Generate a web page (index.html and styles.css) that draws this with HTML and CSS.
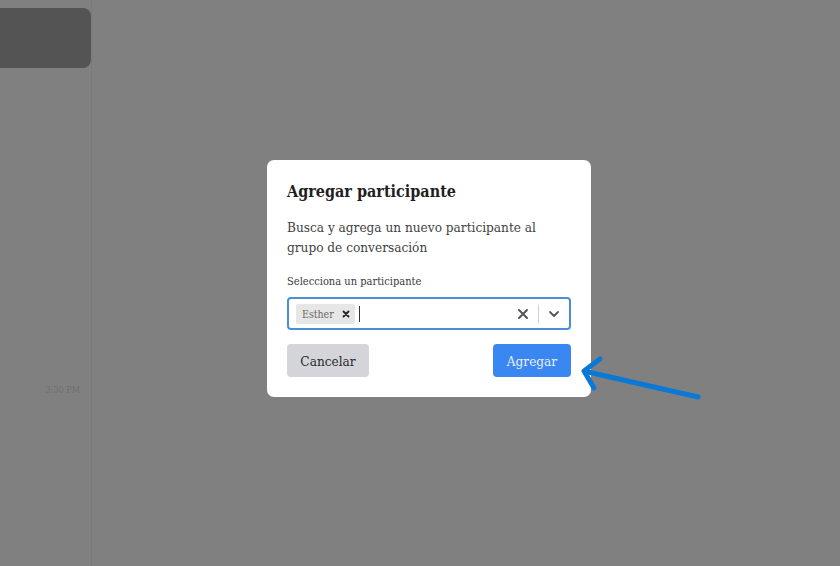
FILE: index.html
```html
<!DOCTYPE html>
<html lang="es">
<head>
<meta charset="utf-8">
<link rel="stylesheet" href="styles.css">
</head>
<body>
<div class="app">
  <aside class="sidebar">
    <div class="side-card"></div>
    <div class="side-time">3:30 PM</div>
  </aside>
  <main class="main"></main>
</div>
<div class="overlay">
  <div class="modal">
    <h2 class="title">Agregar participante</h2>
    <p class="desc">Busca y agrega un nuevo participante al grupo de conversación</p>
    <label class="label">Selecciona un participante</label>
    <div class="select">
      <div class="values">
        <span class="tag"><span class="tag-text">Esther</span><svg class="tag-x" width="8" height="8" viewBox="0 0 8 8"><path d="M1.5 1.5L6.5 6.5M6.5 1.5L1.5 6.5" stroke="#222" stroke-width="1.8" stroke-linecap="round"/></svg></span>
        <span class="caret"></span>
      </div>
      <div class="indicators">
        <svg class="clear" width="12" height="12" viewBox="0 0 12 12"><path d="M2 2L10 10M10 2L2 10" stroke="#555" stroke-width="2" stroke-linecap="round"/></svg>
        <span class="sep"></span>
        <svg class="chev" width="12" height="12" viewBox="0 0 12 12"><path d="M2 4L6 8L10 4" stroke="#555" stroke-width="1.8" fill="none" stroke-linecap="round" stroke-linejoin="round"/></svg>
      </div>
    </div>
    <div class="actions">
      <button class="btn btn-cancel">Cancelar</button>
      <button class="btn btn-add">Agregar</button>
    </div>
  </div>
  <svg class="arrow" width="140" height="60" viewBox="0 0 140 60">
    <path d="M130 41L20 16" stroke="#0a78d6" stroke-width="5" stroke-linecap="round" fill="none"/>
    <path d="M32 3L16 15L26 32" stroke="#0a78d6" stroke-width="5" stroke-linecap="round" stroke-linejoin="round" fill="none"/>
  </svg>
</div>
</body>
</html>
```
FILE: styles.css
```css
* { box-sizing: border-box; }
html, body { margin: 0; padding: 0; width: 840px; height: 566px; overflow: hidden; }
body { font-family: "DejaVu Serif Condensed", "DejaVu Serif", "Liberation Serif", serif; font-stretch: condensed; background: #808080; position: relative; }
.app { display: flex; height: 566px; }
.sidebar { width: 92px; border-right: 1px solid #7a7a7a; padding-top: 8px; display: flex; flex-direction: column; }
.side-card { height: 60px; background: #545454; border-radius: 0 8px 8px 0; }
.side-time { margin-top: 317px; text-align: right; padding-right: 11px; font-size: 9px; color: #6e6e6e; font-family: "DejaVu Serif", serif; }
.main { flex: 1; }
.overlay { position: absolute; inset: 0; display: flex; justify-content: center; padding-top: 160px; padding-left: 18px; }
.modal { width: 324px; height: 237px; background: #fff; border-radius: 7px; padding: 20px; }
.title { margin: 2px 0 0; font-size: 16px; font-weight: bold; color: #1f1f1f; line-height: 20px; }
.desc { margin: 15px 0 0; max-width: 262px; font-size: 13.5px; color: #3f3f3f; line-height: 20px; }
.label { display: block; margin-top: 18px; font-size: 11px; color: #3a3a3a; line-height: 14px; }
.select { margin-top: 8px; height: 33px; border: 2px solid #4a8fd6; border-radius: 4px; display: flex; align-items: center; padding: 0 6px 0 7px; }
.values { flex: 1; display: flex; align-items: center; }
.tag { background: #e6e6e6; border-radius: 2px; height: 20px; display: flex; align-items: center; padding: 0 5px 0 6px; }
.tag-text { font-size: 10.5px; color: #666; }
.tag-x { margin-left: 8px; }
.caret { width: 1px; height: 16px; background: #333; margin-left: 4px; }
.indicators { display: flex; align-items: center; }
.clear { margin-right: 9px; }
.sep { width: 1px; height: 18px; background: #d0d0d0; margin-right: 9px; }
.chev { margin-right: 3px; }
.actions { display: flex; justify-content: space-between; margin-top: 14px; }
.btn { font-family: inherit; font-stretch: condensed; border: none; border-radius: 4px; height: 33px; font-size: 13.5px; padding: 0; }
.btn-cancel { width: 82px; background: #d3d5db; color: #2a2a2a; }
.btn-add { width: 78px; background: #3b87f1; color: #e8f0ff; }
.arrow { position: absolute; left: 568px; top: 356px; }
```
